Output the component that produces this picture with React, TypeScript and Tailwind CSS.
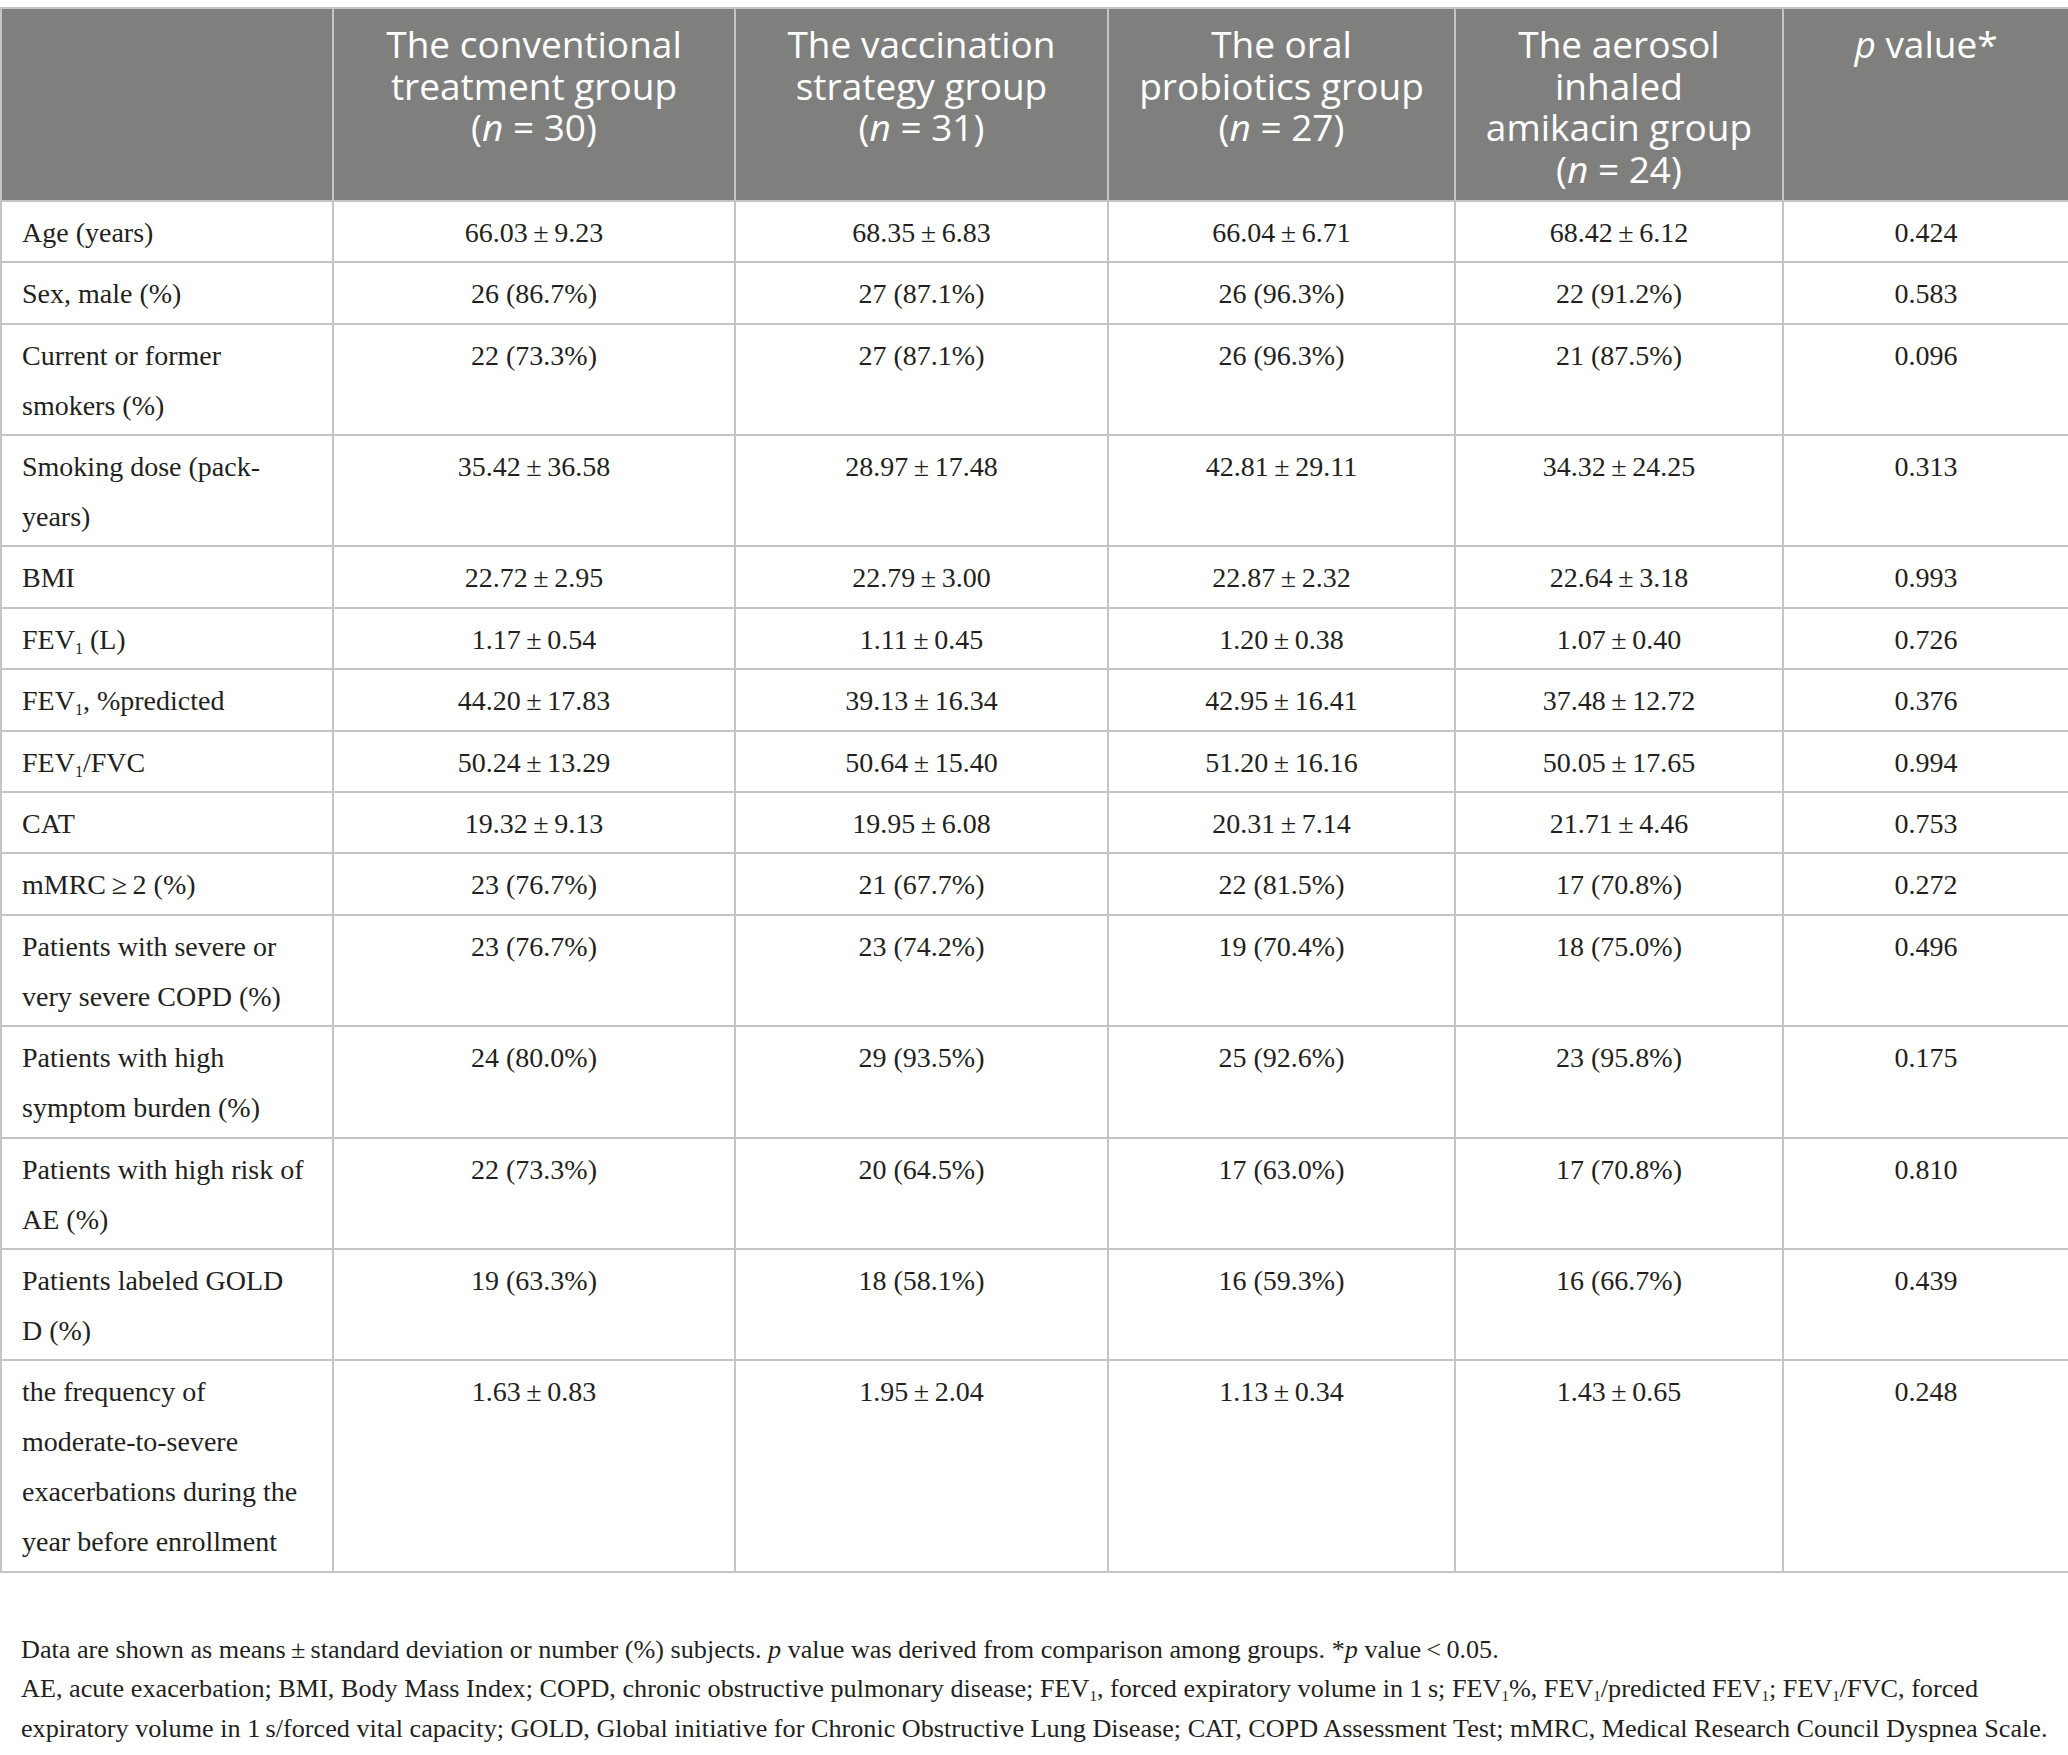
import React from "react";

const Sub = ({ children }: { children: React.ReactNode }) => (
  <span className="relative top-[5px] text-[16px] leading-none">{children}</span>
);

const FSub = () => <span className="relative top-[4px] text-[15px] leading-none">1</span>;

const pm = (a: string, b: string) => `${a}\u2009±\u2009${b}`;

type Row = { label: React.ReactNode; values: string[] };

const rows: Row[] = [
  { label: "Age (years)", values: [pm("66.03", "9.23"), pm("68.35", "6.83"), pm("66.04", "6.71"), pm("68.42", "6.12"), "0.424"] },
  { label: "Sex, male (%)", values: ["26 (86.7%)", "27 (87.1%)", "26 (96.3%)", "22 (91.2%)", "0.583"] },
  { label: <>Current or former<br />smokers (%)</>, values: ["22 (73.3%)", "27 (87.1%)", "26 (96.3%)", "21 (87.5%)", "0.096"] },
  { label: <>Smoking dose (pack-<br />years)</>, values: [pm("35.42", "36.58"), pm("28.97", "17.48"), pm("42.81", "29.11"), pm("34.32", "24.25"), "0.313"] },
  { label: "BMI", values: [pm("22.72", "2.95"), pm("22.79", "3.00"), pm("22.87", "2.32"), pm("22.64", "3.18"), "0.993"] },
  { label: <>FEV<Sub>1</Sub> (L)</>, values: [pm("1.17", "0.54"), pm("1.11", "0.45"), pm("1.20", "0.38"), pm("1.07", "0.40"), "0.726"] },
  { label: <>FEV<Sub>1</Sub>, %predicted</>, values: [pm("44.20", "17.83"), pm("39.13", "16.34"), pm("42.95", "16.41"), pm("37.48", "12.72"), "0.376"] },
  { label: <>FEV<Sub>1</Sub>/FVC</>, values: [pm("50.24", "13.29"), pm("50.64", "15.40"), pm("51.20", "16.16"), pm("50.05", "17.65"), "0.994"] },
  { label: "CAT", values: [pm("19.32", "9.13"), pm("19.95", "6.08"), pm("20.31", "7.14"), pm("21.71", "4.46"), "0.753"] },
  { label: "mMRC\u2009≥\u20092 (%)", values: ["23 (76.7%)", "21 (67.7%)", "22 (81.5%)", "17 (70.8%)", "0.272"] },
  { label: <>Patients with severe or<br />very severe COPD (%)</>, values: ["23 (76.7%)", "23 (74.2%)", "19 (70.4%)", "18 (75.0%)", "0.496"] },
  { label: <>Patients with high<br />symptom burden (%)</>, values: ["24 (80.0%)", "29 (93.5%)", "25 (92.6%)", "23 (95.8%)", "0.175"] },
  { label: <>Patients with high risk of<br />AE (%)</>, values: ["22 (73.3%)", "20 (64.5%)", "17 (63.0%)", "17 (70.8%)", "0.810"] },
  { label: <>Patients labeled GOLD<br />D (%)</>, values: ["19 (63.3%)", "18 (58.1%)", "16 (59.3%)", "16 (66.7%)", "0.439"] },
  {
    label: <>the frequency of<br />moderate-to-severe<br />exacerbations during the<br />year before enrollment</>,
    values: [pm("1.63", "0.83"), pm("1.95", "2.04"), pm("1.13", "0.34"), pm("1.43", "0.65"), "0.248"],
  },
];

const headers: React.ReactNode[] = [
  "",
  <>The conventional<br />treatment group<br />(<i>n</i> = 30)</>,
  <>The vaccination<br />strategy group<br />(<i>n</i> = 31)</>,
  <>The oral<br />probiotics group<br />(<i>n</i> = 27)</>,
  <>The aerosol<br />inhaled<br />amikacin group<br />(<i>n</i> = 24)</>,
  <><i>p</i> value*</>,
];

export default function App() {
  return (
    <div className="w-[2068px] min-h-[1755px] bg-white pt-[7px] text-[#231f20]">
      <table className="w-[2068px] table-fixed border-collapse">
        <colgroup>
          <col className="w-[332px]" />
          <col className="w-[402px]" />
          <col className="w-[373px]" />
          <col className="w-[347px]" />
          <col className="w-[328px]" />
          <col className="w-[286px]" />
        </colgroup>
        <thead>
          <tr className="bg-[#7f807e]">
            {headers.map((h, i) => (
              <th
                key={i}
                className="border-2 border-[#c4c4c4] px-[4px] pt-[14px] pb-[10px] align-top text-center font-normal text-white text-[37px] leading-[41.7px] whitespace-nowrap"
                style={{ fontFamily: '"Open Sans", "Noto Sans", sans-serif' }}
              >
                {h}
              </th>
            ))}
          </tr>
        </thead>
        <tbody style={{ fontFamily: '"Liberation Serif", "Times New Roman", serif' }}>
          {rows.map((r, ri) => (
            <tr key={ri}>
              <td className="border-2 border-[#c4c4c4] pl-[20px] pr-[6px] pt-[6px] pb-[3.4px] align-top text-left text-[28px] leading-[50px] whitespace-nowrap">
                {r.label}
              </td>
              {r.values.map((v, vi) => (
                <td
                  key={vi}
                  className="border-2 border-[#c4c4c4] px-[6px] pt-[6px] pb-[3.4px] align-top text-center text-[28px] leading-[50px] whitespace-nowrap"
                >
                  {v}
                </td>
              ))}
            </tr>
          ))}
        </tbody>
      </table>
      <div
        className="mt-[57px] pl-[21px] text-[26.2px] leading-[39.5px] whitespace-nowrap"
        style={{ fontFamily: '"Liberation Serif", "Times New Roman", serif' }}
      >
        <p>
          Data are shown as means{"\u2009"}±{"\u2009"}standard deviation or number (%) subjects. <i>p</i> value was derived from comparison among groups. *<i>p</i> value{"\u2009"}&lt;{"\u2009"}0.05.
        </p>
        <p>
          AE, acute exacerbation; BMI, Body Mass Index; COPD, chronic obstructive pulmonary disease; FEV<FSub />, forced expiratory volume in 1{"\u2009"}s; FEV<FSub />%, FEV<FSub />/predicted FEV<FSub />; FEV<FSub />/FVC, forced
          <br />
          expiratory volume in 1{"\u2009"}s/forced vital capacity; GOLD, Global initiative for Chronic Obstructive Lung Disease; CAT, COPD Assessment Test; mMRC, Medical Research Council Dyspnea Scale.
        </p>
      </div>
    </div>
  );
}
